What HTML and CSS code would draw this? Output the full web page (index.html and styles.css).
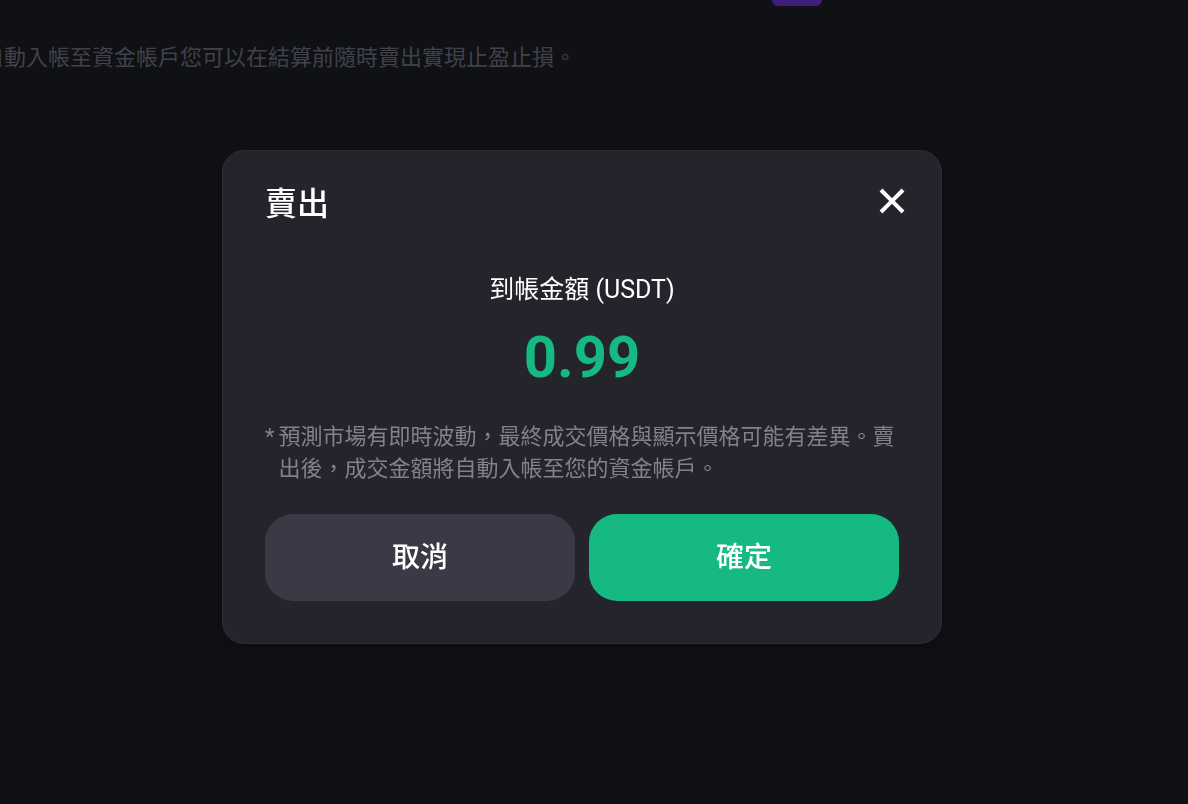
FILE: index.html
```html
<!DOCTYPE html>
<html lang="zh-Hant-TW">
<head>
<meta charset="utf-8">
<meta name="viewport" content="width=device-width, initial-scale=1">
<title>賣出</title>
<link rel="stylesheet" href="styles.css">
</head>
<body>
<main class="page">
  <div class="tab-marker"></div>
  <p class="page-note">自動入帳至資金帳戶您可以在結算前隨時賣出實現止盈止損。</p>
</main>
<div class="overlay">
  <section class="dialog" role="dialog" aria-modal="true" aria-labelledby="dialog-title">
    <header class="dialog-header">
      <h1 class="dialog-title" id="dialog-title">賣出</h1>
      <button class="close" type="button" aria-label="關閉">
        <svg class="close-icon" viewBox="0 0 26 26" aria-hidden="true"><path d="M2 2 24 24M24 2 2 24" fill="none" stroke="currentColor" stroke-width="4"/></svg>
      </button>
    </header>
    <p class="amount-label">到帳金額 (USDT)</p>
    <p class="amount">0.99</p>
    <div class="notice">
      <span class="notice-mark">*</span>
      <p class="notice-text">預測市場有即時波動，最終成交價格與顯示價格可能有差異。賣出後，成交金額將自動入帳至您的資金帳戶。</p>
    </div>
    <div class="actions">
      <button class="button button-cancel" type="button">取消</button>
      <button class="button button-confirm" type="button">確定</button>
    </div>
  </section>
</div>
</body>
</html>
```
FILE: styles.css
```css
* {
  box-sizing: border-box;
}

body {
  margin: 0;
  min-height: 100vh;
  overflow: hidden;
  background: #101114;
  color: #fff;
  font-family: Roboto, "Noto Sans CJK TC", sans-serif;
}

h1,
p {
  margin: 0;
}

.page {
  display: flex;
  flex-direction: column;
  gap: 36px;
}

.tab-marker {
  width: 50px;
  height: 6px;
  margin-left: 65%;
  border-radius: 0 0 6px 6px;
  background: #3d1e7b;
}

.page-note {
  margin-left: -18px;
  color: #41414c;
  font-size: 22px;
  line-height: 32px;
  white-space: nowrap;
}

.overlay {
  position: fixed;
  inset: 0;
  display: flex;
  align-items: center;
  justify-content: center;
  padding: 0 24px 10px 0;
}

.dialog {
  width: 100%;
  max-width: 720px;
  padding: 29px 42px 42px;
  border: 1px solid #2d2d34;
  border-radius: 22px;
  background: #24242c;
  box-shadow: 0 4px 12px rgba(0, 0, 0, 0.3);
}

.dialog-header {
  display: flex;
  align-items: flex-start;
  justify-content: space-between;
  margin-right: -6px;
}

.dialog-title {
  font-size: 32px;
  font-weight: 500;
  line-height: 48px;
}

.close {
  display: flex;
  margin-top: 8px;
  padding: 0;
  border: 0;
  background: none;
  color: #fff;
  cursor: pointer;
}

.close-icon {
  width: 26px;
  height: 26px;
}

.amount-label {
  margin-top: 44px;
  font-size: 25px;
  line-height: 36px;
  text-align: center;
}

.amount {
  margin-top: 13px;
  color: #16b981;
  font-size: 58px;
  font-weight: 700;
  line-height: 72px;
  text-align: center;
}

.notice {
  display: flex;
  gap: 4px;
  margin-top: 28px;
  color: #82828f;
  font-size: 22px;
  line-height: 32px;
}

.notice-mark {
  flex: none;
}

.actions {
  display: grid;
  grid-template-columns: 1fr 1fr;
  gap: 14px;
  margin-top: 29px;
}

.button {
  padding: 22px;
  border: 0;
  border-radius: 28px;
  color: #fff;
  font-family: inherit;
  font-size: 28px;
  font-weight: 500;
  line-height: 43px;
  cursor: pointer;
}

.button-cancel {
  background: #393a46;
}

.button-confirm {
  background: #16b981;
}
```
